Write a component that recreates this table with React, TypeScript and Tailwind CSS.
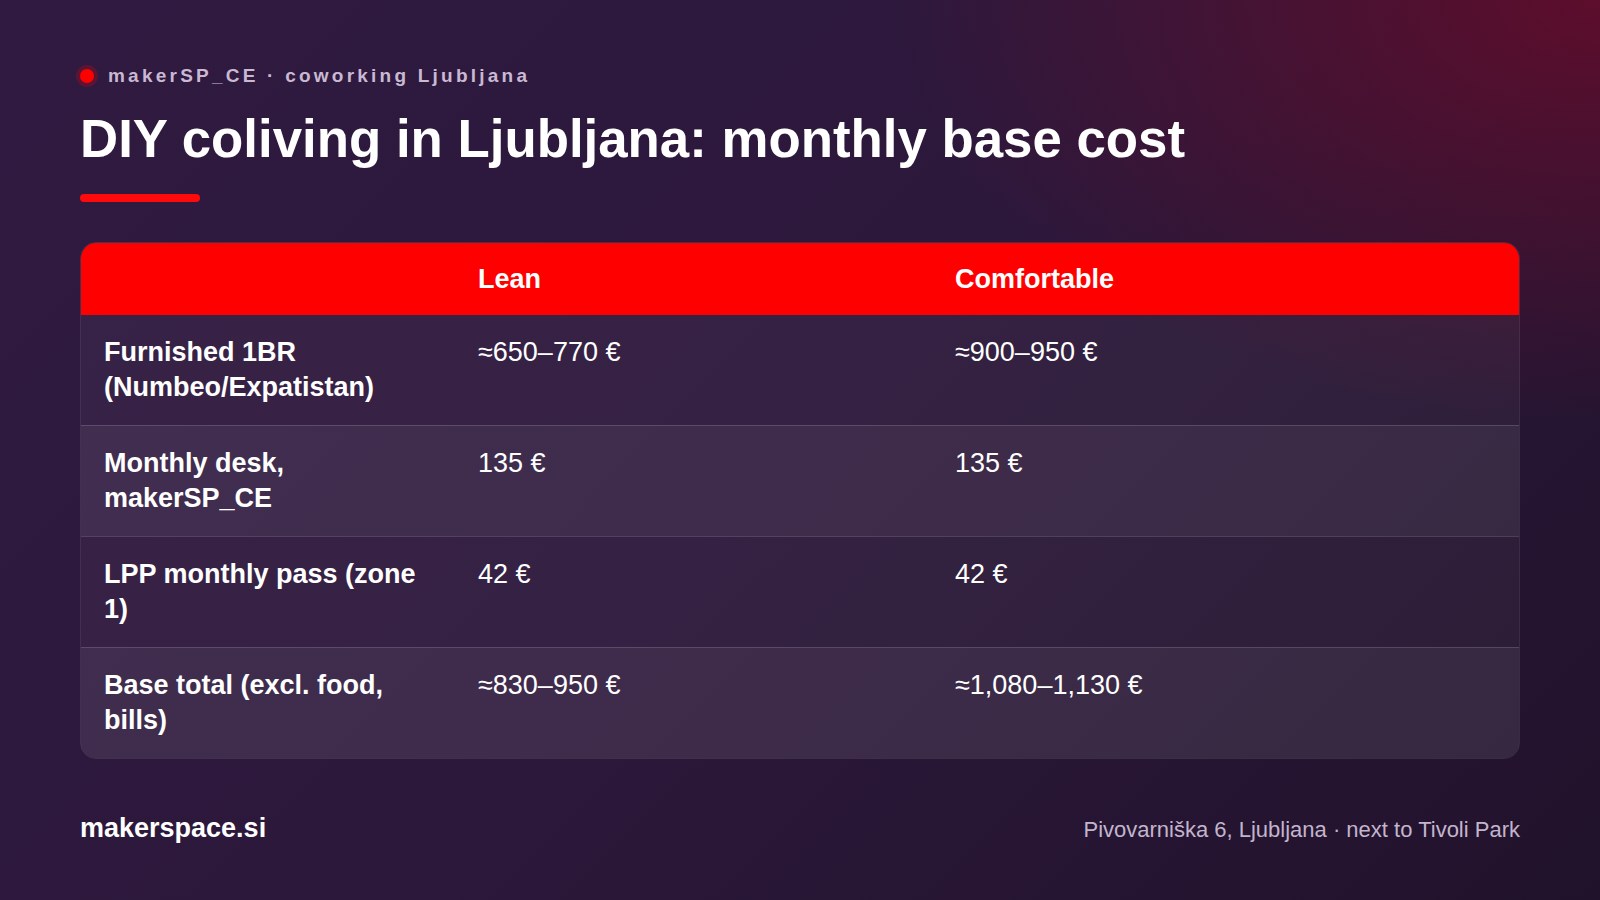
const rows = [
  { label: "Furnished 1BR (Numbeo/Expatistan)", lean: "≈650–770 €", comfy: "≈900–950 €" },
  { label: "Monthly desk, makerSP_CE", lean: "135 €", comfy: "135 €" },
  { label: "LPP monthly pass (zone 1)", lean: "42 €", comfy: "42 €" },
  { label: "Base total (excl. food, bills)", lean: "≈830–950 €", comfy: "≈1,080–1,130 €" },
];

export default function App() {
  return (
    <div className="relative w-[1600px] h-[900px] overflow-hidden bg-[radial-gradient(ellipse_700px_420px_at_100%_0%,rgba(110,10,40,0.75),rgba(110,10,40,0)),linear-gradient(135deg,#301a41_0%,#2c183b_50%,#21122b_100%)] font-['Liberation_Sans',Arial,sans-serif] text-white">
      <div className="flex flex-col h-full px-20 pt-16">
        <div className="flex items-center gap-[14px] h-6">
          <span className="w-[14px] h-[14px] rounded-full bg-[#ff0000] shadow-[0_0_0_4px_rgba(255,0,0,0.22)]" />
          <span className="text-[19px] font-bold tracking-[0.17em] text-[#c9b9d3] leading-6">makerSP_CE · coworking Ljubljana</span>
        </div>

        <h1 className="mt-[22px] text-[52.8px] leading-[58px] font-bold">DIY coliving in Ljubljana: monthly base cost</h1>

        <div className="mt-[26px] w-[120px] h-2 rounded-full bg-[#ff0a0a]" />

        <div className="mt-10 rounded-2xl overflow-hidden border border-white/10 text-[27px] leading-[35px]">
          <div className="grid grid-cols-[373px_477px_1fr] h-[72px] items-center bg-[#ff0000] font-bold">
            <div className="px-6" />
            <div className="px-6">Lean</div>
            <div className="px-6">Comfortable</div>
          </div>
          {rows.map((r, i) => (
            <div
              key={r.label}
              className={`grid grid-cols-[373px_477px_1fr] py-5 ${i > 0 ? "border-t border-white/15" : ""} ${i % 2 === 1 ? "bg-white/[0.09]" : "bg-white/[0.045]"}`}
            >
              <div className="pl-[23px] pr-6 font-bold">{r.label}</div>
              <div className="px-6">{r.lean}</div>
              <div className="px-6">{r.comfy}</div>
            </div>
          ))}
        </div>

        <div className="mt-auto mb-[56px] flex items-end justify-between">
          <div className="text-[27px] font-bold leading-8">makerspace.si</div>
          <div className="text-[22px] leading-7 text-[#c3b5cd]">Pivovarniška 6, Ljubljana · next to Tivoli Park</div>
        </div>
      </div>
    </div>
  );
}
